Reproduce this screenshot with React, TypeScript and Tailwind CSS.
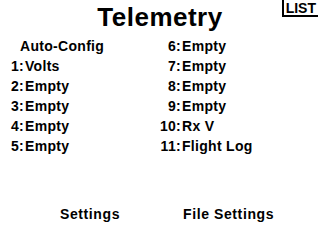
import React from "react";

const left = [
  { n: "", label: "Auto-Config" },
  { n: "1", label: "Volts" },
  { n: "2", label: "Empty" },
  { n: "3", label: "Empty" },
  { n: "4", label: "Empty" },
  { n: "5", label: "Empty" },
];

const right = [
  { n: "6", label: "Empty" },
  { n: "7", label: "Empty" },
  { n: "8", label: "Empty" },
  { n: "9", label: "Empty" },
  { n: "10", label: "Rx V" },
  { n: "11", label: "Flight Log" },
];

function Row({ n, label, numW }: { n: string; label: string; numW: string }) {
  return (
    <div className="flex h-[20px] items-center">
      {n ? (
        <>
          <span className={`${numW} text-right`}>{n}</span>
          <span className="w-[6px]">:</span>
          <span>{label}</span>
        </>
      ) : (
        <span className="pl-[20px]">{label}</span>
      )}
    </div>
  );
}

export default function App() {
  return (
    <div
      className="w-[320px] h-[240px] bg-white text-black font-bold flex flex-col overflow-hidden"
      style={{ fontFamily: '"Liberation Sans", Arial, sans-serif' }}
    >
      {/* header */}
      <div className="grid grid-cols-[1fr_auto_1fr] h-[34px]">
        <div />
        <h1 className="text-[26px] leading-[30px] pt-[2px] tracking-[0.5px]">Telemetry</h1>
        <div className="flex justify-end pr-[2px]">
          <span className="h-[17px] border-l-2 border-b-2 border-black px-[2px] pt-[1px] text-[14px] leading-[14px]">
            LIST
          </span>
        </div>
      </div>

      {/* list */}
      <div className="grid grid-cols-[160px_160px] text-[14px] tracking-[0.3px] pt-[2px]">
        <div className="flex flex-col">
          {left.map((r, i) => (
            <Row key={i} n={r.n} label={r.label} numW="w-[19px]" />
          ))}
        </div>
        <div className="flex flex-col">
          {right.map((r, i) => (
            <Row key={i} n={r.n} label={r.label} numW="w-[16px]" />
          ))}
        </div>
      </div>

      {/* footer */}
      <div className="flex mt-[48px] text-[14px] tracking-[0.6px]">
        <span className="ml-[60px]">Settings</span>
        <span className="ml-[63px]">File Settings</span>
      </div>
    </div>
  );
}
